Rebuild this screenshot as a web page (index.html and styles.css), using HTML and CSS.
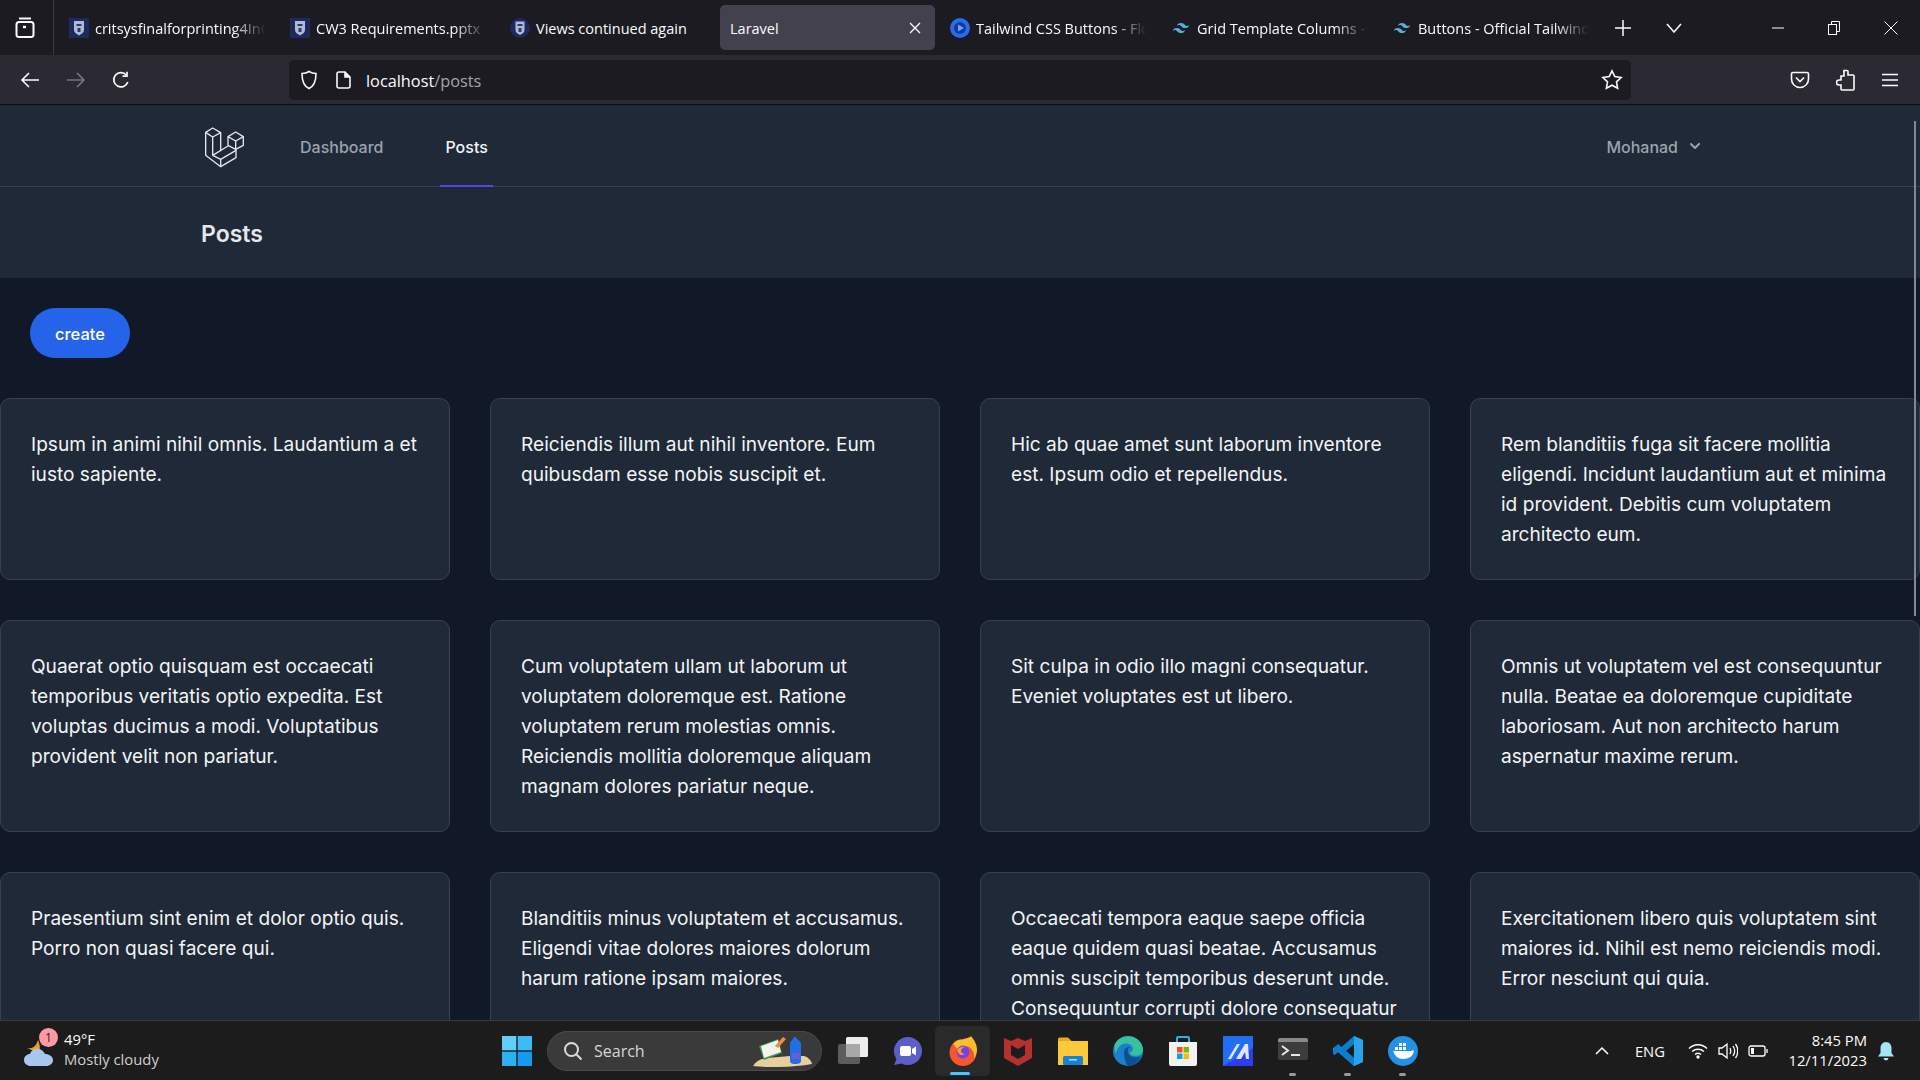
FILE: index.html
```html
<!DOCTYPE html>
<html lang="en">
<head>
  <meta charset="UTF-8">
  <title>Laravel</title>
  <link rel="stylesheet" href="styles.css">
</head>
<body>
  <!-- browser tabs -->
  <div class="tabbar">
    <div class="tabs-menu">
      <svg width="22" height="24" viewBox="0 0 22 24" fill="none" stroke="#fbfbfe" stroke-width="2"><rect x="2.5" y="6" width="17" height="15" rx="2.5"/><path d="M5 2.5h12"/><path d="M9 11h3" stroke-width="2.4"/></svg>
    </div>
    <div class="tab">
      <svg class="favicon" viewBox="0 0 20 20"><rect width="20" height="20" fill="#1c2a5e"/><path d="M5 3h10v9c0 2.500-2.500 4-5 5.500C7.500 16 5 14.500 5 12z" fill="#aebbd6"/><path d="M7.500 6h5v2h-5zM8.500 10h3v4h-3z" fill="#2c3a70"/></svg>
      <span class="tab-title">critsysfinalforprinting4InC</span>
    </div>
    <div class="tab">
      <svg class="favicon" viewBox="0 0 20 20"><rect width="20" height="20" fill="#1c2a5e"/><path d="M5 3h10v9c0 2.500-2.500 4-5 5.500C7.500 16 5 14.500 5 12z" fill="#aebbd6"/><path d="M7.500 6h5v2h-5zM8.500 10h3v4h-3z" fill="#2c3a70"/></svg>
      <span class="tab-title">CW3 Requirements.pptx</span>
    </div>
    <div class="tab tab-short">
      <svg class="favicon" viewBox="0 0 20 20"><circle cx="10" cy="10" r="10" fill="#1c2a5e"/><path d="M5.500 3.500h9v8.500c0 2.500-2 3.500-4.500 5-2.500-1.500-4.500-2.500-4.500-5z" fill="#aebbd6"/><path d="M7.500 6h5v2h-5zM8.500 10h3v4h-3z" fill="#2c3a70"/></svg>
      <span class="tab-title no-fade">Views continued again</span>
    </div>
    <div class="tab tab-active">
      <span class="tab-title no-fade">Laravel</span>
      <svg class="tab-close" width="12" height="12" viewBox="0 0 12 12" stroke="#fbfbfe" stroke-width="1.300"><path d="M1 1l10 10M11 1L1 11"/></svg>
    </div>
    <div class="tab">
      <svg class="favicon" viewBox="0 0 20 20"><circle cx="10" cy="10" r="10" fill="#2a6bf0"/><circle cx="10" cy="10" r="6" fill="#123a9c"/><path d="M8 6.500l6 3.500-6 3.500z" fill="#6ea0ff"/></svg>
      <span class="tab-title">Tailwind CSS Buttons - Flo</span>
    </div>
    <div class="tab">
      <svg class="favicon" viewBox="0 0 24 24" fill="#4fb3d9"><path d="M12 6c-2.670 0-4.330 1.330-5 4 1-1.330 2.170-1.830 3.500-1.500.760.190 1.310.740 1.910 1.350.980 1 2.120 2.150 4.590 2.150 2.670 0 4.330-1.330 5-4-1 1.330-2.170 1.830-3.500 1.500-.760-.190-1.310-.740-1.910-1.350C15.610 7.150 14.470 6 12 6zm-5 6c-2.670 0-4.330 1.330-5 4 1-1.330 2.170-1.830 3.500-1.500.760.190 1.310.740 1.910 1.350C8.390 16.850 9.530 18 12 18c2.670 0 4.330-1.330 5-4-1 1.330-2.170 1.830-3.500 1.500-.760-.190-1.310-.740-1.910-1.350C10.610 13.150 9.470 12 7 12z"/></svg>
      <span class="tab-title">Grid Template Columns -</span>
    </div>
    <div class="tab">
      <svg class="favicon" viewBox="0 0 24 24" fill="#4fb3d9"><path d="M12 6c-2.670 0-4.330 1.330-5 4 1-1.330 2.170-1.830 3.500-1.500.760.190 1.310.740 1.910 1.350.980 1 2.120 2.150 4.590 2.150 2.670 0 4.330-1.330 5-4-1 1.330-2.170 1.830-3.500 1.500-.760-.190-1.310-.740-1.910-1.350C15.610 7.150 14.470 6 12 6zm-5 6c-2.670 0-4.330 1.330-5 4 1-1.330 2.170-1.830 3.500-1.500.760.190 1.310.740 1.910 1.350C8.390 16.850 9.530 18 12 18c2.670 0 4.330-1.330 5-4-1 1.330-2.170 1.830-3.500 1.500-.760-.190-1.310-.740-1.910-1.350C10.610 13.150 9.470 12 7 12z"/></svg>
      <span class="tab-title">Buttons - Official Tailwind</span>
    </div>
    <div class="tab-actions">
      <svg width="16" height="16" viewBox="0 0 16 16" stroke="#fbfbfe" stroke-width="1.500"><path d="M8 0v16M0 8h16"/></svg>
      <svg width="16" height="10" viewBox="0 0 16 10" fill="none" stroke="#fbfbfe" stroke-width="1.500"><path d="M1 1l7 8 7-8"/></svg>
    </div>
    <div class="win-controls">
      <svg width="12" height="12" viewBox="0 0 12 12" stroke="#fbfbfe"><path d="M0 6h12"/></svg>
      <svg width="12" height="14" viewBox="0 0 12 14" fill="none" stroke="#fbfbfe"><rect x="0.500" y="3.500" width="8" height="10"/><path d="M3.500 3.500V.5h8v10h-3"/></svg>
      <svg width="14" height="14" viewBox="0 0 14 14" stroke="#fbfbfe"><path d="M.5.500l13 13M13.500.500l-13 13"/></svg>
    </div>
  </div>

  <!-- address bar -->
  <div class="toolbar">
    <div class="nav-buttons">
      <svg width="20" height="18" viewBox="0 0 20 18" fill="none" stroke="#fbfbfe" stroke-width="1.600"><path d="M19 9H2M9 2L2 9l7 7"/></svg>
      <svg width="20" height="18" viewBox="0 0 20 18" fill="none" stroke="#77767e" stroke-width="1.600"><path d="M1 9h17M11 2l7 7-7 7"/></svg>
      <svg width="18" height="18" viewBox="0 0 18 18" fill="none" stroke="#fbfbfe" stroke-width="1.700"><path d="M15.800 11a7.200 7.200 0 1 1-1.400-7"/><path d="M15 .8v4.400h-4.400"/></svg>
    </div>
    <div class="urlbar">
      <svg width="18" height="20" viewBox="0 0 18 20" fill="none" stroke="#fbfbfe" stroke-width="1.600"><path d="M9 1.500c2 1.300 4.500 2 7 2 0 7-1.500 12.500-7 15-5.500-2.500-7-8-7-15 2.500 0 5-.7 7-2z"/></svg>
      <svg class="page-icon" width="15" height="18" viewBox="0 0 15 18" fill="none" stroke="#fbfbfe" stroke-width="1.600"><path d="M3 1h6l5 5v9a2 2 0 0 1-2 2H3a2 2 0 0 1-2-2V3a2 2 0 0 1 2-2z"/><path d="M9 1v5h5" fill="#fbfbfe"/></svg>
      <span class="url-text">localhost<span class="url-path">/posts</span></span>
      <svg class="star" width="22" height="21" viewBox="0 0 22 21" fill="none" stroke="#fbfbfe" stroke-width="1.600"><path d="M11 1.800l2.800 5.800 6.300.9-4.600 4.400 1.100 6.300-5.600-3-5.600 3 1.100-6.300L1.900 8.500l6.300-.9z"/></svg>
    </div>
    <div class="toolbar-right">
      <svg width="20" height="18" viewBox="0 0 20 18" fill="none" stroke="#fbfbfe" stroke-width="1.600"><path d="M3 1.500h14a1.500 1.500 0 0 1 1.500 1.500v5a8.500 8.500 0 0 1-17 0V3A1.500 1.500 0 0 1 3 1.500z"/><path d="M6 6.500l4 4 4-4"/></svg>
      <svg width="20" height="22" viewBox="0 0 20 22" fill="none" stroke="#fbfbfe" stroke-width="1.600"><path d="M8 1.500h3a1 1 0 0 1 1 1V6h5a1 1 0 0 1 1 1v13a1 1 0 0 1-1 1H6a1 1 0 0 1-1-1v-4H3a2 2 0 0 1 0-5h2V7h3V2.500a1 1 0 0 1 0-1z"/></svg>
      <svg width="16" height="14" viewBox="0 0 16 14" stroke="#fbfbfe" stroke-width="1.700"><path d="M0 1.500h16M0 7h16M0 12.500h16"/></svg>
    </div>
  </div>

  <!-- the page itself -->
  <div class="page">
    <nav class="main-nav">
      <svg class="logo" width="70" height="60" viewBox="0 0 210 180" fill="none" stroke="#e5e7eb" stroke-width="4" stroke-linejoin="round"><path d="M68 36l24 14-24 13-21-14z"/><path d="M47 49v69l45 34 46-27V100"/><path d="M68 63v55l24 12v22"/><path d="M92 50v55"/><path d="M68 118l46-28"/><path d="M92 130l46-27"/><path d="M137 48l23 14-23 13-23-13z"/><path d="M114 62v26l23 12 23-12V62"/><path d="M137 75v25"/></svg>
      <a class="nav-link">Dashboard</a>
      <a class="nav-link nav-current">Posts</a>
      <div class="user-menu">Mohanad
        <svg width="20" height="20" viewBox="0 0 20 20" fill="currentColor"><path d="M5.300 7.300a1 1 0 0 1 1.400 0L10 10.600l3.300-3.300a1 1 0 1 1 1.400 1.400l-4 4a1 1 0 0 1-1.400 0l-4-4a1 1 0 0 1 0-1.400z"/></svg>
      </div>
    </nav>
    <header class="page-header"><h2>Posts</h2></header>
    <div class="actions"><a class="btn-create">create</a></div>
    <div class="post-grid">
      <div class="post-card">Ipsum in animi nihil omnis. Laudantium a et iusto sapiente.</div>
      <div class="post-card">Reiciendis illum aut nihil inventore. Eum quibusdam esse nobis suscipit et.</div>
      <div class="post-card">Hic ab quae amet sunt laborum inventore est. Ipsum odio et repellendus.</div>
      <div class="post-card">Rem blanditiis fuga sit facere mollitia eligendi. Incidunt laudantium aut et minima id provident. Debitis cum voluptatem architecto eum.</div>
      <div class="post-card">Quaerat optio quisquam est occaecati temporibus veritatis optio expedita. Est voluptas ducimus a modi. Voluptatibus provident velit non pariatur.</div>
      <div class="post-card">Cum voluptatem ullam ut laborum ut voluptatem doloremque est. Ratione voluptatem rerum molestias omnis. Reiciendis mollitia doloremque aliquam magnam dolores pariatur neque.</div>
      <div class="post-card">Sit culpa in odio illo magni consequatur. Eveniet voluptates est ut libero.</div>
      <div class="post-card">Omnis ut voluptatem vel est consequuntur nulla. Beatae ea doloremque cupiditate laboriosam. Aut non architecto harum aspernatur maxime rerum.</div>
      <div class="post-card">Praesentium sint enim et dolor optio quis. Porro non quasi facere qui.</div>
      <div class="post-card">Blanditiis minus voluptatem et accusamus. Eligendi vitae dolores maiores dolorum harum ratione ipsam maiores.</div>
      <div class="post-card">Occaecati tempora eaque saepe officia eaque quidem quasi beatae. Accusamus omnis suscipit temporibus deserunt unde. Consequuntur corrupti dolore consequatur</div>
      <div class="post-card">Exercitationem libero quis voluptatem sint maiores id. Nihil est nemo reiciendis modi. Error nesciunt qui quia.</div>
    </div>
    <div class="scroll-thumb"></div>
  </div>

  <!-- windows taskbar -->
  <div class="taskbar">
    <div class="weather">
      <svg class="weather-icon" width="36" height="38" viewBox="0 0 36 38"><path d="M4 16c5 1 9-1 11-8 2 5 3 10 0 13z" fill="#f0a01e"/><path d="M8 34c-4 0-7-2.500-7-6s3-6 6-6c1-4 5-6 9-5 3 .7 5 3 6 5 4 0 8 2.500 8 6 0 3.500-3 6-7 6z" fill="#a9c7ee"/></svg>
      <span class="weather-badge">1</span>
      <div class="weather-text">
        <div>49°F</div>
        <div class="weather-sub">Mostly cloudy</div>
      </div>
    </div>
    <div class="apps">
      <div class="app-slot">
        <svg width="30" height="30" viewBox="0 0 30 30"><rect width="14.300" height="14.300" fill="#5fd0fb"/><rect x="15.700" width="14.300" height="14.300" fill="#3cbcf6"/><rect y="15.700" width="14.300" height="14.300" fill="#2cb0f2"/><rect x="15.700" y="15.700" width="14.300" height="14.300" fill="#149bef"/></svg>
      </div>
      <div class="searchbox">
        <svg width="20" height="20" viewBox="0 0 20 20" fill="none" stroke="#dcdcdc" stroke-width="2"><circle cx="8.500" cy="8.500" r="6.500"/><path d="M13.500 13.500l5 5"/></svg>
        <span>Search</span>
        <svg class="search-art" width="60" height="32" viewBox="0 0 60 32"><path d="M0 31c3-5 8-7 14-8l23-2h14c4 1 7 4 8 8-16 3-40 4-59 2z" fill="#e9cf9b"/><path d="M6 11l19-7 4 14-18 7z" fill="#3a9a5b"/><path d="M8 11l17-6 3 12-17 6z" fill="#f4f4e8"/><path d="M22 11l8-9 3 2-8 9z" fill="#f08a3c"/><path d="M37 9c0-3 3-4 4-7h2c1 3 5 4 5 7v17c0 2-2 3-5 3h-2c-2 0-4-1-4-3z" fill="#1f6fe8"/><rect x="39" y="18" width="8" height="6" fill="#6a5bd8"/></svg>
      </div>
      <div class="app-slot">
        <svg width="30" height="30" viewBox="0 0 30 30"><rect y="8" width="22" height="20" rx="2" fill="#5d5d5d"/><rect x="8" y="1" width="22" height="20" rx="1.500" fill="#ededed"/><rect x="8" y="8" width="14" height="13" fill="#a8a8a8"/></svg>
      </div>
      <div class="app-slot">
        <svg width="30" height="30" viewBox="0 0 30 30"><path d="M15 1a14 14 0 1 1-6.500 26.400L1 29l2.500-6A14 14 0 0 1 15 1z" fill="#5b5fc7"/><rect x="7" y="10" width="11" height="10" rx="2" fill="#fff"/><path d="M19 13l4-2.500v9L19 17z" fill="#fff"/></svg>
      </div>
      <div class="app-slot app-current">
        <svg width="30" height="30" viewBox="0 0 30 30"><circle cx="15" cy="16.500" r="13.500" fill="#f5562e"/><path d="M5 8c3-4 7-5 9-4 3-2 8-2 9-4 3 4 6 8 6 14 0 2-1 6-3 8 1-6-3-12-9-12-3 0-6 1-8 3-1-2-2-3-4-5z" fill="#ffbd2e"/><circle cx="15" cy="16" r="6.500" fill="#7542e5"/><path d="M9 14c2-3 6-4 9-3-3 0-5 2-5 4s2 3 4 3c-3 2-7 1-8-4z" fill="#ff9a2e"/></svg>
        <span class="run-bar"></span>
      </div>
      <div class="app-slot">
        <svg width="28" height="30" viewBox="0 0 28 30"><path d="M0 2l7 3 7-3 7 3 7-3v20l-14 8-14-8z" fill="#b5302e"/><path d="M7 9l7 4 7-4v10l-7 4-7-4z" fill="#1c1c1c"/></svg>
      </div>
      <div class="app-slot">
        <svg width="30" height="30" viewBox="0 0 30 30"><path d="M0 3a1.500 1.500 0 0 1 1.500-1.500H10l4 4H0z" fill="#e8a820"/><rect y="5" width="30" height="24" fill="#fdc93c"/><rect x="5" y="20" width="20" height="9" rx="1.500" fill="#1a80cf"/><rect x="11" y="23" width="8" height="1.500" fill="#a5d6f5"/></svg>
      </div>
      <div class="app-slot">
        <svg width="30" height="30" viewBox="0 0 30 30"><circle cx="15" cy="15" r="15" fill="#1b7fc9"/><path d="M2 8C6 1 13-.5 19 .7c6 1.300 11 7 11 13 0 5-4 6-8 6-3 0-5-1-5.500-3 3-1 4-3.500 3-5.500C18 7 12 6.500 8 9c-3 2-5 6-5 9-1-3-2-6-1-10z" fill="#35c39f"/><path d="M11 16c0-3 3-5.500 6-5-2 1-2.500 3-2 5 1 5 7 7 13 4-2 6-7 10-13 10 -3-3-4-10-4-14z" fill="#0e4f92"/></svg>
      </div>
      <div class="app-slot">
        <svg width="30" height="30" viewBox="0 0 30 30"><path d="M1 6h28v22a2 2 0 0 1-2 2H3a2 2 0 0 1-2-2z" fill="#f2f2f2"/><path d="M9 6V2a1 1 0 0 1 1-1h10a1 1 0 0 1 1 1v4" fill="none" stroke="#26b3e8" stroke-width="2"/><rect x="9" y="11" width="5.500" height="5.500" fill="#f25022"/><rect x="15.500" y="11" width="5.500" height="5.500" fill="#7fba00"/><rect x="9" y="17.500" width="5.500" height="5.500" fill="#00a4ef"/><rect x="15.500" y="17.500" width="5.500" height="5.500" fill="#ffb900"/></svg>
      </div>
      <div class="app-slot">
        <svg width="30" height="30" viewBox="0 0 30 30"><rect width="30" height="30" fill="#2d3cf0"/><path d="M0 0h30v12L0 30z" fill="#1a8df0" opacity=".6"/><path d="M5 23L14 8h3L8 23zM13 23l9-15h3l1 15h-3l-1-7-4 7z" fill="#dfe6ff"/></svg>
      </div>
      <div class="app-slot">
        <svg width="30" height="30" viewBox="0 0 30 30"><rect y="2" width="30" height="22" rx="2" fill="#3d3d3d"/><path d="M0 4a2 2 0 0 1 2-2h26a2 2 0 0 1 2 2v2H0z" fill="#8a8a8a"/><path d="M4 10l6 4.500L4 19" fill="none" stroke="#e6e6e6" stroke-width="2"/><rect x="13" y="18" width="9" height="2" fill="#e6e6e6"/></svg>
        <span class="run-dot"></span>
      </div>
      <div class="app-slot">
        <svg width="30" height="30" viewBox="0 0 30 30"><path d="M21 0l9 4v22l-9 4L5 16l-3.500 3L0 17.500V12.500L1.500 11 5 14z" fill="#0a7fd0"/><path d="M21 0l9 4v22l-9 4z" fill="#2aa3ef"/><path d="M21 8l-8 7 8 7z" fill="#1c1c1c"/><path d="M1.500 11L5 8l16 14v8L5 16l-3.500 3L0 17.500v-5z" fill="#0a7fd0"/></svg>
        <span class="run-dot"></span>
      </div>
      <div class="app-slot">
        <svg width="30" height="30" viewBox="0 0 30 30"><circle cx="15" cy="15" r="15" fill="#2391e6"/><path d="M5 15h18c1-1 2-1 3 0-1 5-5 8-11 8-5 0-8-3-10-8z" fill="#fff"/><path d="M7 11h3v3H7zM11 11h3v3h-3zM15 11h3v3h-3zM11 7h3v3h-3zM15 7h3v3h-3z" fill="#fff"/></svg>
        <span class="run-dot"></span>
      </div>
    </div>
    <div class="tray">
      <svg class="tray-chevron" width="14" height="9" viewBox="0 0 14 9" fill="none" stroke="#fff" stroke-width="1.500"><path d="M1 8l6-6 6 6"/></svg>
      <span class="tray-lang">ENG</span>
      <svg class="tray-wifi" width="20" height="16" viewBox="0 0 20 16" fill="none" stroke="#fff" stroke-width="1.400"><path d="M1 5.500c5-5 13-5 18 0M4 8.500c3.500-3 8.500-3 12 0M7 11.500c1.800-1.500 4.200-1.500 6 0"/><circle cx="10" cy="14" r="1" fill="#fff"/></svg>
      <svg class="tray-vol" width="20" height="18" viewBox="0 0 20 18" fill="none" stroke="#fff" stroke-width="1.300"><path d="M1 6h3l5-4v14l-5-4H1z"/><path d="M12 6c1 2 1 4 0 6M15 4c2 3 2 7 0 10M17.500 2c3 4 3 10 0 14"/></svg>
      <svg class="tray-batt" width="20" height="12" viewBox="0 0 20 12" fill="none" stroke="#fff" stroke-width="1.300"><rect x="1" y="1" width="16" height="10" rx="2"/><rect x="3" y="3" width="3" height="6" fill="#fff" stroke="none"/><path d="M19 4v4"/></svg>
      <div class="clock">
        <div>8:45 PM</div>
        <div>12/11/2023</div>
      </div>
      <svg class="tray-bell" width="18" height="20" viewBox="0 0 18 20"><path d="M9 1c3.500 0 5.500 3 5.500 6v5l2.500 3.500H1L3.500 12V7c0-3 2-6 5.500-6z" fill="#a5e5f5"/><path d="M6.500 17h5a2.500 2.500 0 0 1-5 0z" fill="#a5e5f5"/></svg>
    </div>
  </div>
</body>
</html>
```

FILE: styles.css
```css
* {
  box-sizing: border-box;
}

html, body {
  height: 100%;
}

body {
  margin: 0;
  display: flex;
  flex-direction: column;
  height: 1080px;
  overflow: hidden;
  background-color: #111827;
  font-family: "Open Sans", "Noto Sans", sans-serif;
  color: #fbfbfe;
}

/* browser tabs */
.tabbar {
  height: 55px;
  flex: none;
  display: flex;
  align-items: center;
  background-color: #1c1b22;
  font-size: 14.5px;
}

.tabs-menu {
  width: 54px;
  height: 55px;
  padding-left: 14px;
  display: flex;
  align-items: center;
  border-right: 1px solid #3a3942;
}

.tab {
  width: 221px;
  height: 45px;
  padding-left: 15px;
  display: flex;
  align-items: center;
  gap: 6px;
}

.tab-short {
  width: 222px;
  margin-left: -2px;
  padding-left: 16px;
}

.favicon {
  width: 20px;
  height: 20px;
  flex: none;
}

.tab-title {
  width: 176px;
  padding-top: 2px;
  white-space: nowrap;
  -webkit-mask-image: linear-gradient(to right, #000 78%, transparent 97%);
  mask-image: linear-gradient(to right, #000 78%, transparent 97%);
}

.no-fade {
  -webkit-mask-image: none;
  mask-image: none;
}

.tab-active {
  width: 215px;
  margin-left: 4px;
  padding: 0 14px 0 10px;
  border-radius: 5px;
  background-color: #42414d;
  justify-content: space-between;
}

.tab-active .tab-title {
  width: auto;
}

.tab-actions {
  width: 90px;
  margin-left: 17px;
  display: flex;
  align-items: center;
  gap: 35px;
}

.win-controls {
  margin-left: auto;
  padding-right: 22px;
  display: flex;
  align-items: center;
  gap: 44px;
}

/* address bar */
.toolbar {
  height: 50px;
  flex: none;
  display: flex;
  align-items: center;
  background-color: #2b2a33;
  border-bottom: 1px solid #0c0c10;
}

.nav-buttons {
  width: 289px;
  padding-left: 20px;
  display: flex;
  align-items: center;
  gap: 26px;
}

.urlbar {
  width: 1342px;
  height: 40px;
  padding: 0 8px 0 11px;
  display: flex;
  align-items: center;
  border-radius: 5px;
  background-color: #1c1b22;
}

.page-icon {
  margin-left: 18px;
}

.url-text {
  margin-left: 15px;
  padding-top: 2px;
  font-size: 16.3px;
}

.url-path {
  color: #a5a4ab;
}

.star {
  margin-left: auto;
}

.toolbar-right {
  margin-left: 159px;
  display: flex;
  align-items: center;
  gap: 26px;
}

/* page */
.page {
  position: relative;
  flex: 1;
  min-height: 0;
  overflow: hidden;
  background-color: #111827;
  font-family: Inter, "Noto Sans", sans-serif;
}

.main-nav {
  height: 82px;
  padding: 0 215px 0 190px;
  display: flex;
  align-items: center;
  background-color: #1f2937;
  border-bottom: 1px solid #374151;
  font-size: 16px;
  font-weight: 500;
}

.logo {
  flex: none;
}

.nav-link {
  height: 82px;
  margin-left: 40px;
  padding-top: 3px;
  display: flex;
  align-items: center;
  color: #9ca3af;
}

.nav-current {
  margin-left: 57px;
  padding: 3px 5px 0;
  border-top: 2px solid transparent;
  border-bottom: 2px solid #4f46e5;
  color: #f3f4f6;
}

.user-menu {
  margin-left: auto;
  padding-top: 2px;
  display: flex;
  align-items: center;
  gap: 7px;
  color: #9ca3af;
}

.user-menu svg {
  margin-top: -2px;
}

.page-header {
  height: 91px;
  padding: 3px 201px 0;
  display: flex;
  align-items: center;
  background-color: #1f2937;
}

.page-header h2 {
  margin: 0;
  font-size: 23px;
  font-weight: 600;
  color: #e5e7eb;
}

.actions {
  padding: 30px 30px 40px;
  display: flex;
}

.btn-create {
  width: 100px;
  height: 50px;
  padding-top: 2px;
  display: flex;
  align-items: center;
  justify-content: center;
  border-radius: 25px;
  background-color: #2563eb;
  color: #fff;
  font-size: 16.5px;
  font-weight: 500;
}

.post-grid {
  display: grid;
  grid-template-columns: repeat(4, 1fr);
  gap: 40px;
}

.post-card {
  padding: 30px;
  background-color: #1f2937;
  border: 1px solid #374151;
  border-radius: 10px;
  color: #f3f4f6;
  font-size: 19.1px;
  line-height: 30px;
}

.scroll-thumb {
  position: absolute;
  top: 16px;
  right: 4px;
  width: 2px;
  height: 495px;
  background-color: #84878d;
}

/* taskbar */
.taskbar {
  height: 60px;
  flex: none;
  display: flex;
  align-items: center;
  background-color: #1c1c1c;
  border-top: 1px solid #3a3a3a;
  font-size: 14.8px;
}

.weather {
  position: relative;
  width: 489px;
  padding-left: 23px;
  display: flex;
  align-items: center;
  gap: 5px;
}

.weather-badge {
  position: absolute;
  left: 39px;
  top: -4px;
  width: 19px;
  height: 19px;
  border-radius: 50%;
  background-color: #ff99a4;
  color: #1c1c1c;
  font-size: 12px;
  line-height: 19px;
  text-align: center;
}

.weather-text {
  margin-top: -4px;
  line-height: 20px;
}

.weather-sub {
  color: #d0d0d0;
}

.apps {
  display: flex;
  align-items: center;
}

.app-slot {
  position: relative;
  width: 55px;
  height: 50px;
  display: flex;
  align-items: center;
  justify-content: center;
}

.app-current {
  border-radius: 5px;
  background-color: #2a2a2a;
}

.run-bar {
  position: absolute;
  left: 15px;
  bottom: 1px;
  width: 20px;
  height: 3px;
  border-radius: 2px;
  background-color: #4cc2ff;
}

.run-dot {
  position: absolute;
  left: 24px;
  bottom: 0;
  width: 7px;
  height: 3px;
  border-radius: 2px;
  background-color: #9a9a9a;
}

.searchbox {
  width: 275px;
  height: 40px;
  margin: 0 3px;
  padding: 0 8px 0 15px;
  display: flex;
  align-items: center;
  gap: 11px;
  border-radius: 20px;
  background-color: #3a3a3a;
  border: 1px solid #4a4a4a;
  color: #d6d6d6;
  font-size: 16px;
}

.search-art {
  margin-left: auto;
}

.tray {
  margin-left: auto;
  padding-right: 25px;
  display: flex;
  align-items: center;
}

.tray-lang {
  margin: 0 23px 0 26px;
}

.tray-vol {
  margin-left: 10px;
}

.tray-batt {
  margin-left: 10px;
}

.clock {
  width: 99px;
  margin-top: -2px;
  text-align: right;
  line-height: 20px;
}

.tray-bell {
  margin-left: 10px;
}
```
